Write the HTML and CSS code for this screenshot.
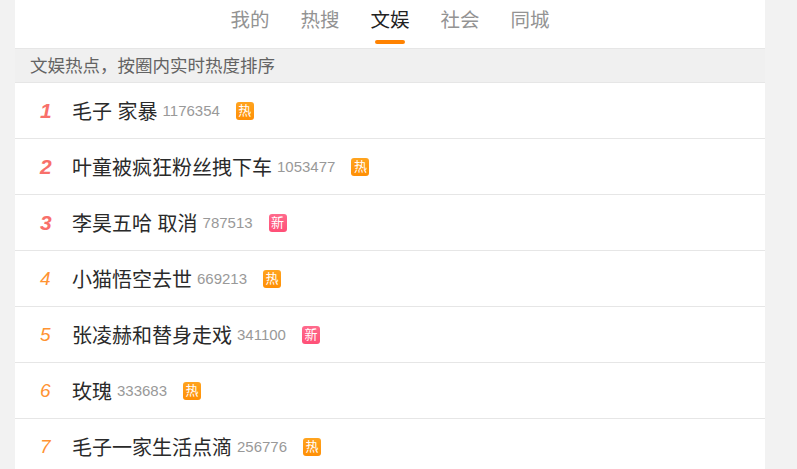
FILE: index.html
```html
<!DOCTYPE html>
<html lang="zh-CN">
<head>
<meta charset="utf-8">
<title>文娱热点</title>
<link rel="stylesheet" href="styles.css">
</head>
<body>
<main class="page">
  <nav class="tabs">
    <a class="tab">我的</a>
    <a class="tab">热搜</a>
    <a class="tab active">文娱</a>
    <a class="tab">社会</a>
    <a class="tab">同城</a>
  </nav>
  <div class="note">文娱热点，按圈内实时热度排序</div>
  <ul class="list">
    <li class="row"><span class="rank top">1</span><span class="title">毛子 家暴</span><span class="num">1176354</span><span class="badge hot">热</span></li>
    <li class="row"><span class="rank top">2</span><span class="title">叶童被疯狂粉丝拽下车</span><span class="num">1053477</span><span class="badge hot">热</span></li>
    <li class="row"><span class="rank top">3</span><span class="title">李昊五哈 取消</span><span class="num">787513</span><span class="badge new">新</span></li>
    <li class="row"><span class="rank">4</span><span class="title">小猫悟空去世</span><span class="num">669213</span><span class="badge hot">热</span></li>
    <li class="row"><span class="rank">5</span><span class="title">张凌赫和替身走戏</span><span class="num">341100</span><span class="badge new">新</span></li>
    <li class="row"><span class="rank">6</span><span class="title">玫瑰</span><span class="num">333683</span><span class="badge hot">热</span></li>
    <li class="row"><span class="rank">7</span><span class="title">毛子一家生活点滴</span><span class="num">256776</span><span class="badge hot">热</span></li>
  </ul>
</main>
</body>
</html>
```

FILE: styles.css
```css
html, body {
  margin: 0;
  height: 100%;
  overflow: hidden;
  background: #f2f2f2;
}
body {
  font-family: "Liberation Sans", "Noto Sans CJK SC", sans-serif;
}
.page {
  width: 750px;
  margin-left: 15px;
}
.tabs {
  display: flex;
  justify-content: center;
  gap: 31px;
  height: 48px;
  background: #fff;
  border-bottom: 1px solid #e6e6e6;
}
.tab {
  position: relative;
  font-size: 19.5px;
  line-height: 40px;
  color: #939393;
}
.tab.active {
  color: #222;
}
.tab.active::after {
  content: "";
  position: absolute;
  left: 4.5px;
  right: 4.5px;
  bottom: 4px;
  height: 4px;
  border-radius: 2px;
  background: #ff8200;
}
.note {
  height: 33px;
  padding-left: 15px;
  font-size: 17.5px;
  line-height: 34px;
  color: #636363;
  background: #f0f0f0;
  border-bottom: 1px solid #e6e6e6;
}
.list {
  list-style: none;
  margin: 0;
  padding: 0;
  background: #fff;
}
.row {
  display: flex;
  align-items: center;
  height: 55px;
  border-bottom: 1px solid #e6e6e6;
}
.rank {
  width: 57px;
  padding-left: 25px;
  box-sizing: border-box;
  font-size: 19px;
  font-style: italic;
  color: #ff9332;
}
.rank.top {
  font-size: 21px;
  font-weight: bold;
  color: #f8706a;
}
.title {
  font-size: 20px;
  color: #2a2a2a;
}
.num {
  margin-left: 5px;
  font-size: 15px;
  color: #999;
}
.badge {
  width: 18px;
  height: 18px;
  margin-left: 16px;
  border-radius: 3px;
  font-size: 13px;
  line-height: 18px;
  text-align: center;
  color: #fff;
}
.hot {
  background: linear-gradient(#ffa41f, #ff8f05);
}
.new {
  background: linear-gradient(#ff6a8c, #ff4f77);
}
```
